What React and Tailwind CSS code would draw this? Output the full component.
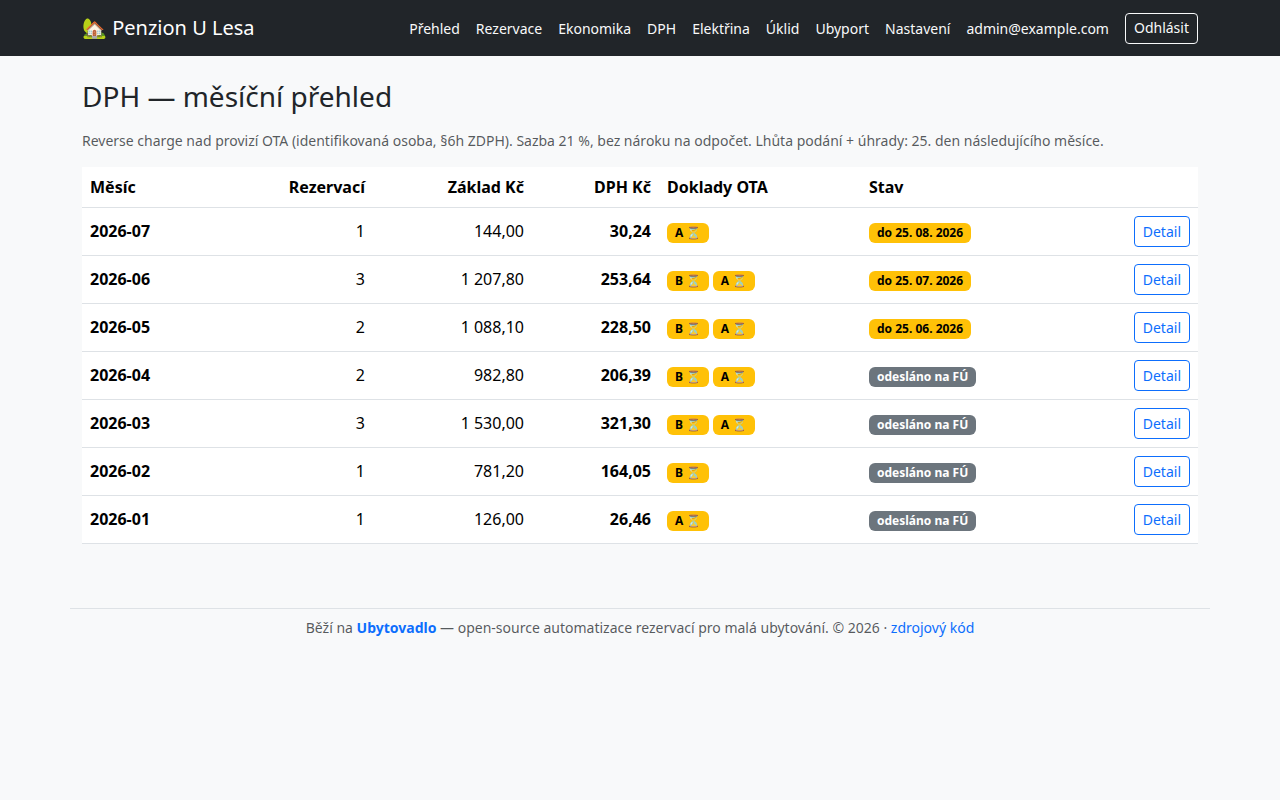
const links = ['Přehled', 'Rezervace', 'Ekonomika', 'DPH', 'Elektřina', 'Úklid', 'Ubyport', 'Nastavení', 'admin@example.com'];

const rows = [
  { month: '2026-07', count: 1, base: '144,00', vat: '30,24', docs: ['A'], state: 'do 25. 08. 2026', sent: false },
  { month: '2026-06', count: 3, base: '1 207,80', vat: '253,64', docs: ['B', 'A'], state: 'do 25. 07. 2026', sent: false },
  { month: '2026-05', count: 2, base: '1 088,10', vat: '228,50', docs: ['B', 'A'], state: 'do 25. 06. 2026', sent: false },
  { month: '2026-04', count: 2, base: '982,80', vat: '206,39', docs: ['B', 'A'], state: 'odesláno na FÚ', sent: true },
  { month: '2026-03', count: 3, base: '1 530,00', vat: '321,30', docs: ['B', 'A'], state: 'odesláno na FÚ', sent: true },
  { month: '2026-02', count: 1, base: '781,20', vat: '164,05', docs: ['B'], state: 'odesláno na FÚ', sent: true },
  { month: '2026-01', count: 1, base: '126,00', vat: '26,46', docs: ['A'], state: 'odesláno na FÚ', sent: true },
];

function Badge({ sent, children }) {
  return (
    <span className={`inline-block rounded-[6px] px-2 py-[4px] text-[12px] font-bold leading-[12px] align-baseline whitespace-nowrap ${sent ? 'bg-[#6c757d] text-white' : 'bg-[#ffc107] text-black'}`}>
      {children}
    </span>
  );
}

export default function App() {
  return (
    <div className="min-h-[800px] bg-[#f8f9fa] text-[#212529] font-['Noto_Sans',sans-serif] text-base">
      <nav className="h-14 bg-[#212529]">
        <div className="w-[1140px] mx-auto px-3 h-full flex items-center justify-between">
          <a className="text-xl text-white whitespace-nowrap">🏡 Penzion U Lesa</a>
          <div className="flex items-center gap-4 text-sm leading-[24px] text-[#f8f9fa]">
            {links.map(l => <a key={l} className="pt-[1px]">{l}</a>)}
            <button className="h-[31px] px-2 border border-[#f8f9fa] rounded-[4px] text-[#f8f9fa] text-sm">Odhlásit</button>
          </div>
        </div>
      </nav>

      <main className="w-[1140px] mx-auto px-3 pt-6">
        <h1 className="text-[28px] leading-[34px] mb-[17px] -mt-[1px] font-normal">DPH — měsíční přehled</h1>
        <p className="text-sm leading-[21px] text-[#212529bf] mb-4">
          Reverse charge nad provizí OTA (identifikovaná osoba, §6h ZDPH). Sazba 21 %, bez nároku na odpočet. Lhůta podání + úhrady: 25. den následujícího měsíce.
        </p>
        <table className="w-full table-fixed bg-white border-collapse text-black">
          <colgroup>
            <col className="w-[190px]" />
            <col className="w-[101px]" />
            <col className="w-[159px]" />
            <col className="w-[127px]" />
            <col className="w-[202px]" />
            <col className="w-[230px]" />
            <col className="w-[107px]" />
          </colgroup>
          <thead>
            <tr className="border-b border-[#dee2e6] font-bold">
              <th className="p-2 text-left">Měsíc</th>
              <th className="p-2 text-right">Rezervací</th>
              <th className="p-2 text-right">Základ Kč</th>
              <th className="p-2 text-right">DPH Kč</th>
              <th className="p-2 text-left">Doklady OTA</th>
              <th className="p-2 text-left">Stav</th>
              <th className="p-2"></th>
            </tr>
          </thead>
          <tbody>
            {rows.map(r => (
              <tr key={r.month} className="border-b border-[#dee2e6]">
                <td className="px-2 pt-[7px] pb-[9px] font-bold">{r.month}</td>
                <td className="px-2 pt-[7px] pb-[9px] text-right">{r.count}</td>
                <td className="px-2 pt-[7px] pb-[9px] text-right">{r.base}</td>
                <td className="px-2 pt-[7px] pb-[9px] text-right font-bold">{r.vat}</td>
                <td className="p-2">
                  <div className="flex gap-[3.6px] pt-[3px]">
                    {r.docs.map(d => <Badge key={d}>{d} ⏳</Badge>)}
                  </div>
                </td>
                <td className="p-2"><div className="flex pt-[3px]"><Badge sent={r.sent}>{r.state}</Badge></div></td>
                <td className="p-2 text-right">
                  <button className="h-[31px] px-2 border border-[#0d6efd] rounded-[4px] text-sm text-[#0d6efd]">Detail</button>
                </td>
              </tr>
            ))}
          </tbody>
        </table>
      </main>

      <footer className="w-[1140px] mx-auto mt-16 border-t border-[#dee2e6] pt-2 text-center text-sm leading-[21px] text-[#212529bf]">
        Běží na <a className="font-bold text-[#0d6efd]">Ubytovadlo</a> — open-source automatizace rezervací pro malá ubytování. © 2026 · <a className="text-[#0d6efd]">zdrojový kód</a>
      </footer>
    </div>
  );
}
